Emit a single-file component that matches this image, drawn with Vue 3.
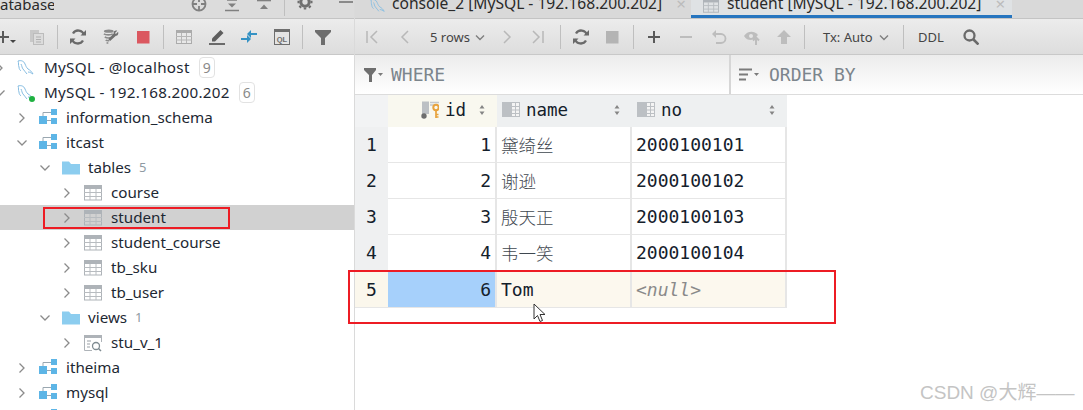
<script setup>
const treeRows = [
  { level: 0, icon: 'dolphin', label: 'MySQL - @localhost', badge: '9', open: false },
  { level: 0, icon: 'dolphin', label: 'MySQL - 192.168.200.202', badge: '6', open: true, live: true },
  { level: 1, icon: 'schema', label: 'information_schema', open: false },
  { level: 1, icon: 'schema', label: 'itcast', open: true },
  { level: 2, icon: 'folder', label: 'tables', count: '5', open: true },
  { level: 3, icon: 'table', label: 'course', open: false },
  { level: 3, icon: 'table', label: 'student', open: false, selected: true },
  { level: 3, icon: 'table', label: 'student_course', open: false },
  { level: 3, icon: 'table', label: 'tb_sku', open: false },
  { level: 3, icon: 'table', label: 'tb_user', open: false },
  { level: 2, icon: 'folder', label: 'views', count: '1', open: true },
  { level: 3, icon: 'view', label: 'stu_v_1', open: false },
  { level: 1, icon: 'schema', label: 'itheima', open: false },
  { level: 1, icon: 'schema', label: 'mysql', open: false },
  { level: 1, icon: 'schema', label: '', open: false, ghost: true }
]

const paneTools = [
  { i: 'target', ml: 137 }, { i: 'alignDown', ml: 17 }, { i: 'alignUp', ml: 16 },
  { sep: true, ml: 12 }, { i: 'gear', ml: 12 }, { i: 'minus', ml: 25 }
]

const leftTools = [
  { i: 'plus', ml: -5 }, { i: 'caret', ml: -1, small: true }, { i: 'copy', ml: 13 }, { sep: true, ml: 12 },
  { i: 'refresh', ml: 12 }, { i: 'wrench', ml: 17 }, { i: 'stopRed', ml: 16 }, { sep: true, ml: 12 },
  { i: 'tableTool', ml: 12 }, { i: 'pencil', ml: 17 }, { i: 'arrows', ml: 16 }, { i: 'ql', ml: 17 },
  { sep: true, ml: 12 }, { i: 'filter', ml: 12 }
]

const rightTools = [
  { i: 'first', ml: 9 }, { i: 'prev', ml: 17 }, { t: '5 rows', ml: 17, w: 38 }, { i: 'chev', ml: 4 },
  { i: 'next', ml: 11 }, { i: 'last', ml: 15 }, { sep: true, ml: 14 }, { i: 'refresh', ml: 12 },
  { i: 'stopGray', ml: 15 }, { sep: true, ml: 13 }, { i: 'plus', ml: 12 }, { i: 'minusGray', ml: 16 },
  { i: 'undo', ml: 17 }, { i: 'eye', ml: 17 }, { i: 'up', ml: 16 }, { sep: true, ml: 12 },
  { t: 'Tx: Auto', ml: 18, w: 47 }, { i: 'chev', ml: 6 }, { sep: true, ml: 11 }, { t: 'DDL', ml: 14, w: 24 },
  { i: 'search', ml: 21 }
]

const dataRows = [
  { n: 1, id: 1, name: '黛绮丝', no: '2000100101' },
  { n: 2, id: 2, name: '谢逊', no: '2000100102' },
  { n: 3, id: 3, name: '殷天正', no: '2000100103' },
  { n: 4, id: 4, name: '韦一笑', no: '2000100104' }
]
</script>

<template>
  <div class="screen">
    <svg class="defs" aria-hidden="true">
      <symbol id="dolphin" viewBox="0 0 18 18"><path d="M1 2c3-1 6 0 7 3 1 2 1 3 3 5 2 1 4 3 5 5-2-1-3-2-5-2M1 2c1 2 0 4 1 6 0 2 1 3 2 4M4 5c1 2 1 4 2 5 1 2 3 3 4 5" fill="none" stroke="#86bde2" stroke-width="1"/></symbol>
      <symbol id="schema" viewBox="0 0 18 18"><path d="M4 7V3.500H12M8 11.500H12" fill="none" stroke="#9aa7b0" stroke-width="1"/><rect x="0" y="7" width="8" height="8" fill="#5db5e6"/><rect x="12" y="0" width="6" height="6" fill="#5db5e6"/><rect x="12" y="9" width="6" height="6" fill="#5db5e6"/></symbol>
      <symbol id="folder" viewBox="0 0 18 18"><path d="M0 2.500h7l2 2.500h9v10.500H0z" fill="#8ccdef"/></symbol>
      <symbol id="table" viewBox="0 0 18 18"><rect x=".5" y="1.500" width="17" height="14.500" fill="none" stroke="#aeb3b8"/><rect x="0" y="1" width="18" height="4" fill="#aeb3b8"/><path d="M0 8.500h18M0 12.500h18M6 5v11M12 5v11" stroke="#b8bcc0" stroke-width="1"/></symbol>
      <symbol id="view" viewBox="0 0 18 18"><path d="M8 16.500H.5v-15h17V8" fill="none" stroke="#aeb3b8"/><rect x="0" y="1" width="18" height="3" fill="#aeb3b8"/><path d="M3 7h4M3 10h3M3 13h3" stroke="#9aa0a6" stroke-width="1.200"/><circle cx="12" cy="12" r="3.500" fill="#fff" stroke="#7f8b91" stroke-width="1.300"/><path d="M14.500 14.500L17 17" stroke="#7f8b91" stroke-width="1.500"/></symbol>
      <symbol id="column" viewBox="0 0 18 18"><rect x="0" y="1" width="9.500" height="15" fill="#bcc0c4"/><rect x="9.500" y="1.500" width="8" height="14" fill="#f4f4f4" stroke="#bcc0c4"/><path d="M10 5.500h7M10 9h7M10 12.500h7M13.500 2v13" stroke="#bcc0c4"/></symbol>
      <symbol id="keycol" viewBox="0 0 18 18"><rect x="1" y=".5" width="7" height="12.500" fill="#bcc0c4"/><path d="M9 1.500h9M9 4h4" stroke="#c4c8cb" stroke-width="1.500"/><circle cx="3" cy="15" r="2.700" fill="#6e6e6e"/><circle cx="15" cy="6.500" r="2.700" fill="none" stroke="#e8a33d" stroke-width="2"/><path d="M15 9v8M15 13.500h2.500M15 16h2.500" stroke="#e8a33d" stroke-width="1.700"/></symbol>
      <symbol id="target" viewBox="0 0 16 16"><circle cx="8" cy="8" r="6.500" fill="none" stroke="#808080" stroke-width="1.800"/><path d="M8 1v5M8 10v5M1 8h5M10 8h5" stroke="#808080" stroke-width="1.800"/></symbol>
      <symbol id="alignDown" viewBox="0 0 16 16"><path d="M1 14.500h14M3 4h10" stroke="#808080" stroke-width="1.600"/><path d="M4 7.500h8l-4 4z" fill="#808080"/></symbol>
      <symbol id="alignUp" viewBox="0 0 16 16"><path d="M1 4.500h14" stroke="#808080" stroke-width="1.600"/><path d="M4 13h8L8 8.500z" fill="#808080"/></symbol>
      <symbol id="gear" viewBox="0 0 16 16"><circle cx="8" cy="6" r="4.200" fill="none" stroke="#6e6e6e" stroke-width="3"/><path d="M8 -1.500v2M8 11.500v2M.5 6h2M13.500 6h2M2.500 11.500l1.500-1.500M13.500 11.500L12 10M2.500 .5L4 2M13.500 .5L12 2" stroke="#6e6e6e" stroke-width="2.500"/></symbol>
      <symbol id="minus" viewBox="0 0 16 16"><path d="M1 6h14" stroke="#808080" stroke-width="1.800"/></symbol>
      <symbol id="plus" viewBox="0 0 16 16"><path d="M8 2v12M2 8h12" stroke="#5a5a5a" stroke-width="2"/></symbol>
      <symbol id="caret" viewBox="0 0 6 16"><path d="M0 11h6l-3 3z" fill="#444"/></symbol>
      <symbol id="copy" viewBox="0 0 16 16"><path d="M1 1h9v3H4v9H1z" fill="#c8c8c8"/><rect x="4.500" y="4.500" width="10" height="11" fill="#dcdcdc" stroke="#bcbcbc"/><path d="M7 8h5M7 10.500h5M7 13h5" stroke="#b0b0b0"/></symbol>
      <symbol id="refresh" viewBox="0 0 16 16"><path d="M14 6A6 6 0 0 0 3 4.500M2 10a6 6 0 0 0 11 1.500" fill="none" stroke="#6a6a6a" stroke-width="2.300"/><path d="M10.500 6.500H16V1zM5.500 9.500H0V15z" fill="#6a6a6a"/></symbol>
      <symbol id="wrench" viewBox="0 0 18 18"><ellipse cx="6.500" cy="2.500" rx="5.500" ry="1.800" fill="#8a8a8a"/><path d="M1 5.500c2 1.500 8 1.500 10 0M2 9c2 1.200 5 1.200 7 .7M3 12.500c1 .7 2 .8 4 .7M4 15.500c1 .3 1 .3 2 .3" fill="none" stroke="#8a8a8a" stroke-width="1.800"/><path d="M17 3l-2.500 2.500-1-1L16 2c-2-1-4.500.5-4 3l-6 6.500 2 2 6.500-6c2 .3 3.300-2 2.500-4.500z" fill="#707070"/></symbol>
      <symbol id="stopRed" viewBox="0 0 16 16"><rect x="2" y="2" width="12.500" height="12.500" fill="#db5860"/></symbol>
      <symbol id="stopGray" viewBox="0 0 16 16"><rect x="2" y="2" width="12.500" height="12.500" fill="#b4b4b4"/></symbol>
      <symbol id="tableTool" viewBox="0 0 16 16"><rect x=".5" y="1.500" width="15" height="13" fill="#e8e8e8" stroke="#ababab"/><rect x="0" y="1" width="16" height="3" fill="#ababab"/><path d="M0 7.500h16M0 11h16M5.500 4v10M10.500 4v10" stroke="#b6b6b6"/></symbol>
      <symbol id="pencil" viewBox="0 0 16 16"><path d="M3 9.500L11.500 1l3 3L6 12.500H3z" fill="#5e5e5e"/><path d="M0 15h16" stroke="#5e5e5e" stroke-width="1.800"/></symbol>
      <symbol id="arrows" viewBox="0 0 16 16"><path d="M16 4H10V1L6 5l4 4V6h6zM0 9h6V6l4 4-4 4v-3H0z" fill="#3592c4"/></symbol>
      <symbol id="ql" viewBox="0 0 16 16"><rect x=".5" y=".5" width="15" height="15" fill="#e4e4e4" stroke="#6e6e6e"/><rect x="0" y="0" width="16" height="3" fill="#6e6e6e"/><text x="8" y="12.500" text-anchor="middle" font-family="Liberation Sans, sans-serif" font-size="7.500" font-weight="700" fill="#6e6e6e">QL</text></symbol>
      <symbol id="filter" viewBox="0 0 16 16"><path d="M0 1h16v2L10 9v7H6V9L0 3z" fill="#6e6e6e"/></symbol>
      <symbol id="first" viewBox="0 0 16 16"><path d="M3 2v12M13 2L7 8l6 6" fill="none" stroke="#b8b8b8" stroke-width="1.500"/></symbol>
      <symbol id="prev" viewBox="0 0 16 16"><path d="M11 2L5 8l6 6" fill="none" stroke="#b8b8b8" stroke-width="1.500"/></symbol>
      <symbol id="next" viewBox="0 0 16 16"><path d="M5 2l6 6-6 6" fill="none" stroke="#b8b8b8" stroke-width="1.500"/></symbol>
      <symbol id="last" viewBox="0 0 16 16"><path d="M3 2l6 6-6 6M13 2v12" fill="none" stroke="#b8b8b8" stroke-width="1.500"/></symbol>
      <symbol id="chev" viewBox="0 0 16 16"><path d="M4 6.500l4 4 4-4" fill="none" stroke="#7f7f7f" stroke-width="1.400"/></symbol>
      <symbol id="minusGray" viewBox="0 0 16 16"><path d="M2 8h12" stroke="#bdbdbd" stroke-width="2"/></symbol>
      <symbol id="undo" viewBox="0 0 16 16"><path d="M4 5h6a4 4 0 0 1 0 9H5" fill="none" stroke="#bdbdbd" stroke-width="1.800"/><path d="M5 1v8L1 5z" fill="#bdbdbd"/></symbol>
      <symbol id="eye" viewBox="0 0 16 16"><path d="M0 7c3-5 10-6 14-1l-4 4-3 1C4 11 2 10 0 7z" fill="#bdbdbd"/><circle cx="7" cy="7" r="2" fill="#e4e4e4"/><path d="M12 16V9M9 11.500l3-3 3 3" fill="none" stroke="#bdbdbd" stroke-width="2"/></symbol>
      <symbol id="up" viewBox="0 0 16 16"><path d="M8 1l7 7h-4v7H5V8H1z" fill="#bdbdbd"/></symbol>
      <symbol id="search" viewBox="0 0 16 16"><circle cx="6.500" cy="6.500" r="5" fill="none" stroke="#6a6a6a" stroke-width="2.300"/><path d="M10 10l5.500 5.500" stroke="#6a6a6a" stroke-width="2.600"/></symbol>
      <symbol id="sort" viewBox="0 0 8 12"><path d="M4 1l2.500 3.500h-5zM4 11L1.500 7.500h5z" fill="#858585"/></symbol>
      <symbol id="order" viewBox="0 0 20 16"><path d="M0 2.500h13M0 7.500h9M0 12.500h7" stroke="#7b7b7b" stroke-width="2"/><path d="M15 6h5l-2.500 3z" fill="#7b7b7b"/></symbol>
      <symbol id="whereIcon" viewBox="0 0 20 16"><path d="M0 1h12v2L8 8v7H5V8L0 3z" fill="#6e6e6e"/><path d="M14 6h5l-2.500 3z" fill="#7b7b7b"/></symbol>
    </svg>

    <aside class="left">
      <header class="pane-title">
        <span class="pane-name">atabase</span>
        <template v-for="(t, k) in paneTools" :key="k">
          <span v-if="t.sep" class="sep short" :style="{ marginLeft: t.ml + 'px' }"></span>
          <svg v-else class="tool" :style="{ marginLeft: t.ml + 'px' }"><use :href="'#' + t.i" /></svg>
        </template>
      </header>
      <div class="toolbar">
        <template v-for="(t, k) in leftTools" :key="k">
          <span v-if="t.sep" class="sep" :style="{ marginLeft: t.ml + 'px' }"></span>
          <svg v-else class="tool" :class="{ small: t.small }" :style="{ marginLeft: t.ml + 'px' }"><use :href="'#' + t.i" /></svg>
        </template>
      </div>
      <ul class="tree">
        <li v-for="r in treeRows" :key="r.label" class="tree-row" :class="['lv' + r.level, { selected: r.selected }]">
          <svg class="twist" viewBox="0 0 12 12">
            <path v-if="r.open" d="M1.500 3.500L6 8l4.500-4.500" />
            <path v-else d="M3.500 1.500L8 6l-4.500 4.500" />
          </svg>
          <span class="node-icon">
            <svg class="ico18"><use :href="'#' + r.icon" /></svg>
            <i v-if="r.live" class="live"></i>
          </span>
          <span class="node-label">{{ r.label }}</span>
          <span v-if="r.badge" class="badge">{{ r.badge }}</span>
          <span v-if="r.count" class="count">{{ r.count }}</span>
        </li>
      </ul>
    </aside>

    <main class="right">
      <nav class="tabs">
        <div class="tab console">
          <svg class="tab-icon"><use href="#dolphin" /></svg>
          <span class="tab-text">console_2 [MySQL - 192.168.200.202]</span>
          <span class="tab-x">×</span>
        </div>
        <div class="tab active">
          <svg class="tab-icon"><use href="#table" /></svg>
          <span class="tab-text">student [MySQL - 192.168.200.202]</span>
          <span class="tab-x">×</span>
        </div>
      </nav>
      <div class="toolbar">
        <template v-for="(t, k) in rightTools" :key="k">
          <span v-if="t.sep" class="sep" :style="{ marginLeft: t.ml + 'px' }"></span>
          <span v-else-if="t.t" class="tool-text" :style="{ marginLeft: t.ml + 'px', width: t.w + 'px' }">{{ t.t }}</span>
          <svg v-else class="tool" :style="{ marginLeft: t.ml + 'px' }"><use :href="'#' + t.i" /></svg>
        </template>
      </div>
      <div class="filters">
        <div class="filter where">
          <svg class="filter-icon"><use href="#whereIcon" /></svg>
          <span>WHERE</span>
        </div>
        <div class="filter order">
          <svg class="filter-icon"><use href="#order" /></svg>
          <span>ORDER BY</span>
        </div>
      </div>
      <div class="grid">
        <div class="head corner"></div>
        <div class="head idh">
          <svg class="ico18"><use href="#keycol" /></svg>
          <span class="col">id</span>
          <svg class="sort"><use href="#sort" /></svg>
        </div>
        <div class="head">
          <svg class="ico18"><use href="#column" /></svg>
          <span class="col">name</span>
          <svg class="sort push"><use href="#sort" /></svg>
        </div>
        <div class="head">
          <svg class="ico18"><use href="#column" /></svg>
          <span class="col">no</span>
          <svg class="sort push"><use href="#sort" /></svg>
        </div>
        <template v-for="d in dataRows" :key="d.n">
          <div class="cell num">{{ d.n }}</div>
          <div class="cell idc">{{ d.id }}</div>
          <div class="cell cjk">{{ d.name }}</div>
          <div class="cell">{{ d.no }}</div>
        </template>
        <div class="cell num new">5</div>
        <div class="cell idc chosen">6</div>
        <div class="cell new">Tom</div>
        <div class="cell new nul">&lt;null&gt;</div>
      </div>
    </main>

    <div class="mark box-tree"></div>
    <div class="mark box-row"></div>
    <svg class="cursor" viewBox="0 0 13 20"><path d="M1 1v15l3.500-3.500 2.500 6 2.500-1-2.500-6H12z" fill="#fff" stroke="#333" stroke-width="1"/></svg>
    <div class="watermark">CSDN @大辉——</div>
  </div>
</template>

<style>
html, body { margin: 0; background: #fff; }
</style>

<style scoped>
.screen {
  position: relative;
  display: flex;
  width: 1083px;
  height: 410px;
  overflow: hidden;
  background: #fff;
  color: #1d2833;
  font-family: "Noto Sans", "Noto Sans CJK SC", sans-serif;
  font-size: 15.200px;
}
.defs { position: absolute; width: 0; height: 0; }
.left {
  flex: 0 0 355px;
  width: 355px;
  border-right: 1px solid #dadada;
  box-sizing: border-box;
  overflow: hidden;
}
.right { flex: 1; min-width: 0; }

.pane-title, .tabs {
  display: flex;
  height: 18px;
  border-bottom: 1px solid #c4c4c4;
  background: #dcdcdc;
  overflow: hidden;
}
.pane-title { align-items: center; }
.pane-name {
  width: 54px;
  margin-top: -11px;
  font-size: 15px;
  line-height: 20px;
  overflow: hidden;
  color: #2a2a2a;
}
.pane-title .tool { margin-top: -10px; }
.pane-title .sep.short { height: 18px; margin-top: -4px; }

.toolbar {
  display: flex;
  align-items: center;
  height: 35px;
  border-bottom: 1px solid #c8c8c8;
  background: linear-gradient(#ececec, #dddddd);
}
.tool { flex: 0 0 16px; width: 16px; height: 16px; overflow: visible; }
.tool.small { flex-basis: 6px; width: 6px; }
.sep { flex: 0 0 1px; width: 1px; height: 24px; background: #bfbfbf; }
.tool-text { flex: none; font-size: 13px; line-height: 16px; color: #444; white-space: nowrap; }

.tree { margin: 0; padding: 0; list-style: none; }
.tree-row {
  position: relative;
  display: flex;
  align-items: center;
  height: 25px;
  line-height: 25px;
  white-space: nowrap;
}
.tree-row.selected { background: #d1d1d1; }
.lv0 { padding-left: 0; margin-left: -6px; }
.lv0 .node-label { letter-spacing: .3px; }
.lv1 { padding-left: 16px; }
.lv2 { padding-left: 39px; }
.lv3 { padding-left: 61px; }
.twist { flex: 0 0 12px; width: 12px; height: 12px; margin-right: 11px; }
.twist path { fill: none; stroke: #8b8b8b; stroke-width: 1.300; }
.node-icon { position: relative; flex: 0 0 18px; width: 18px; height: 18px; margin-right: 9px; }
.ico18 { display: block; flex: none; width: 18px; height: 18px; }
.live {
  position: absolute;
  left: 12px;
  top: 12px;
  width: 6px;
  height: 6px;
  border-radius: 50%;
  background: #1fb141;
}
.lv2 .node-label { margin-left: -1px; }
.badge {
  margin-left: 9px;
  padding: 0 3px;
  height: 19px;
  line-height: 19px;
  font-size: 14px;
  color: #8a8a8a;
  border: 1px solid #e2e2e2;
  border-radius: 4px;
}
.count { margin-left: 8px; font-size: 13px; color: #8f9aa3; }

.tabs { background: #d9d9d9; }
.tab {
  position: relative;
  display: flex;
  align-items: flex-end;
  flex: none;
  height: 18px;
  box-sizing: border-box;
  white-space: nowrap;
  font-size: 15.600px;
}
.tab.console { width: 336px; padding-left: 15px; }
.tab.active {
  width: 321px;
  padding-left: 12px;
  background: #dfe2e4;
  border-bottom: 3px solid #2675bf;
}
.tab-icon { flex: none; width: 16px; height: 16px; margin-bottom: 4px; margin-right: 6px; }
.tab.active .tab-icon { margin-right: 8px; margin-bottom: 1px; }
.tab-text { margin-bottom: 6px; line-height: 18px; color: #2a2a2a; }
.tab.active .tab-text { margin-bottom: 3px; }
.tab-x { margin-left: 14px; margin-bottom: 5px; line-height: 18px; font-size: 17px; color: #bcbcbc; }
.tab.active .tab-x { margin-bottom: 2px; }

.filters {
  display: flex;
  height: 39px;
  border-bottom: 1px solid #dcdcdc;
  background: linear-gradient(#ececec, #ffffff);
}
.filter {
  display: flex;
  align-items: center;
  font-family: "DejaVu Sans Mono", monospace;
  font-size: 18px;
  color: #7c858c;
}
.filter-icon { flex: none; width: 20px; height: 16px; margin-right: 7px; }
.where { width: 376px; box-sizing: border-box; padding-left: 9px; border-right: 2px solid #d6d6d6; }
.order { padding-left: 8px; }
.order .filter-icon { margin-right: 10px; }

.grid {
  display: grid;
  grid-template-columns: 33px 109px 135px 155px;
  grid-template-rows: 32px 36px 36px 36px 36px 37px;
  width: 432px;
  font-family: "DejaVu Sans Mono", "Noto Sans CJK SC", monospace;
  font-size: 18px;
  color: #14202b;
}
.head {
  display: flex;
  align-items: center;
  padding-left: 5px;
  padding-right: 11px;
  padding-bottom: 2px;
  background: #eef0f1;
  font-size: 17.500px;
  box-sizing: border-box;
}
.corner { padding: 0; background: #f2f3f4; }
.head.idh { justify-content: flex-end; background: #f9f8ef; }
.col { margin-left: 6px; }
.sort { flex: none; width: 8px; height: 12px; margin-left: 12px; }
.sort.push { margin-left: auto; }
.cell {
  display: flex;
  align-items: center;
  padding-left: 4px;
  box-sizing: border-box;
  border-right: 2px solid #e6e6e6;
  border-bottom: 1px solid #e6e6e6;
  white-space: nowrap;
}
.num { padding-left: 11px; background: #eff0f1; border-right: 0; border-bottom-color: #eff0f1; }
.idc { justify-content: flex-end; padding-right: 4px; }
.cjk { font-family: "Noto Sans CJK SC", sans-serif; font-size: 17.500px; font-weight: 300; color: #3f4850; }
.new { background: #fcf8ee; }
.num.new { background: #fbf7ec; border-bottom-color: #e6e6e6; }
.chosen { background: #a6d0fb; }
.nul { font-style: italic; color: #8a8a8a; }

.mark { position: absolute; box-sizing: border-box; border: 2px solid #ed1c24; }
.box-tree { left: 43px; top: 207px; width: 187px; height: 22px; }
.box-row { left: 348px; top: 270px; width: 488px; height: 54px; }
.cursor { position: absolute; left: 533px; top: 303px; width: 13px; height: 20px; }
.watermark {
  position: absolute;
  left: 920px;
  top: 382px;
  font-family: "Liberation Sans", "Noto Sans CJK SC", sans-serif;
  font-size: 19px;
  line-height: 22px;
  color: #c4c4c4;
  white-space: nowrap;
}
</style>
